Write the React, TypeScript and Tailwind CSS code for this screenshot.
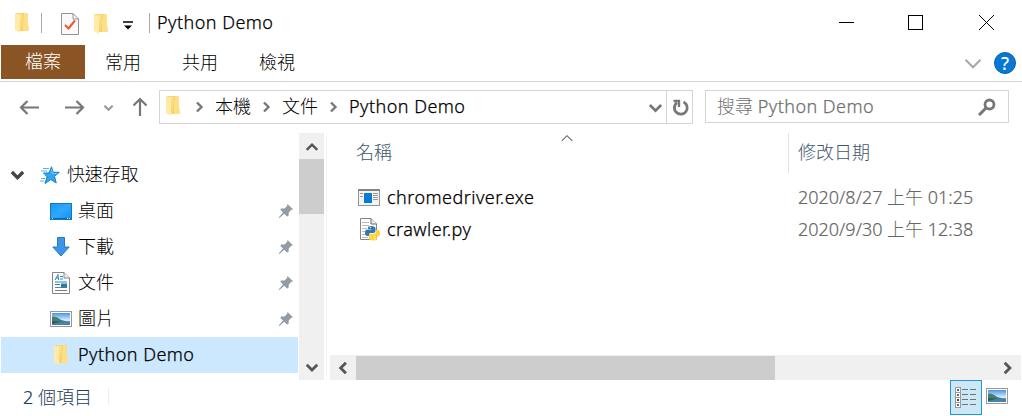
import type { ReactNode } from "react";

function Folder({ className = "" }: { className?: string }) {
  return (
    <svg width="16" height="22" viewBox="0 0 16 22" className={`shrink-0 ${className}`}>
      <defs>
        <linearGradient id="folderFace" x1="0" y1="0" x2="1" y2="1">
          <stop offset="0" stopColor="#ffe9a3" />
          <stop offset="1" stopColor="#f7cf62" />
        </linearGradient>
      </defs>
      <path d="M2 1H13.5V14.5L14.5 15V19H5L1 17Z" fill="#f3cb62" />
      <path d="M10 1H13.5V12L14.5 13V19H8Z" fill="#ffdf86" />
      <path d="M1 1L6 3V21L1 18Z" fill="#ffeaaa" />
      <path d="M3 1.5H9V19H6V4Z" fill="url(#folderFace)" />
    </svg>
  );
}

function Chevron({ dir, size = 12, color = "#777", stroke = 2.4, className = "" }: { dir: "up" | "down" | "left" | "right"; size?: number; color?: string; stroke?: number; className?: string }) {
  const paths = {
    up: "M1.5 8.5L6 4L10.5 8.5",
    down: "M1.5 4L6 8.5L10.5 4",
    left: "M8.5 1.5L4 6L8.5 10.5",
    right: "M4 1.5L8.5 6L4 10.5",
  };
  return (
    <svg width={size} height={size} viewBox="0 0 12 12" className={`shrink-0 ${className}`} fill="none" stroke={color} strokeWidth={stroke}>
      <path d={paths[dir]} />
    </svg>
  );
}

function Pin() {
  return (
    <svg width="16" height="16" viewBox="0 0 16 16" className="mr-[5px] shrink-0">
      <path d="M9.5 1L15 6.3L13 7L10.7 9.8L10.5 13L9 13.5L6.2 10.7L1.5 15L.7 14.5L5 9.5L2.3 6.7L3 5.5L6.5 5.4L9 3Z" fill="#939ca5" />
    </svg>
  );
}

function Picture() {
  return (
    <svg width="22" height="16" viewBox="0 0 22 16" className="shrink-0">
      <defs>
        <linearGradient id="sky" x1="0" y1="0" x2="0" y2="1">
          <stop offset="0" stopColor="#4a94ea" />
          <stop offset=".6" stopColor="#d8edfa" />
        </linearGradient>
      </defs>
      <rect x=".5" y=".5" width="21" height="15" fill="#fff" stroke="#999" />
      <rect x="2" y="2" width="18" height="12" fill="url(#sky)" />
      <path d="M2 5.5Q6 5 9 7.5T20 10.5V11H2Z" fill="#477f6d" />
      <path d="M2 10.5H20V14H2Z" fill="#4682ab" />
      <path d="M2 10L12 10.5L2 13Z" fill="#285f61" />
    </svg>
  );
}

function Desktop() {
  return (
    <svg width="22" height="17" viewBox="0 0 22 17">
      <defs>
        <linearGradient id="screen" x1="0" y1="0" x2="1" y2="1">
          <stop offset="0" stopColor="#1996f4" />
          <stop offset=".5" stopColor="#30a8ff" />
          <stop offset="1" stopColor="#148cf0" />
        </linearGradient>
      </defs>
      <rect x=".5" y=".5" width="21" height="16" fill="url(#screen)" stroke="#1577bd" />
      <path d="M1 15.5H21" stroke="#0868aa" />
      <path d="M2 15.5H3M17 15.5H18M19 15.5H20" stroke="#c5e9ff" />
    </svg>
  );
}

function Download() {
  return (
    <svg width="18" height="20" viewBox="0 0 18 20">
      <path d="M5.5.5H12.5V10H17.2L9 19L.8 10H5.5Z" fill="#3c95e8" stroke="#2679c6" />
    </svg>
  );
}

function Document() {
  return (
    <svg width="18" height="22" viewBox="0 0 18 22">
      <path d="M.5.5H12L17.5 6V21.5H.5Z" fill="#fff" stroke="#858585" />
      <path d="M12 .5V6H17.5" fill="#eee" stroke="#858585" />
      <path d="M3 8L6 2.5L6.5 8M4 6H6.5M8 4.5H11M8 7H11M3 10H15M3 12.5H8" fill="none" stroke="#2587c7" />
      <path d="M3 15.5H15M3 18.5H15" stroke="#707b82" />
      <rect x="9" y="11.5" width="6" height="4" fill="#287ca8" />
    </svg>
  );
}

function QuickAccess() {
  return (
    <svg width="20" height="19" viewBox="0 0 20 19" className="shrink-0">
      <path d="M11.5.8L13.2 6.3H19.3L14.5 10.3L16.2 17L10.8 13.5L5 17.5L7 10.8L3.5 7H9Z" fill="#2fa6f3" stroke="#147fc9" />
      <path d="M3 2.5H9M1 5H7M4 8H6M1 12.5H5M0 15H4" stroke="#59b3e9" />
      <path d="M11.5 3L12.2 7.5H17" fill="none" stroke="#75ccff" />
    </svg>
  );
}

function ExeIcon() {
  return (
    <svg width="22" height="17" viewBox="0 0 22 17" className="shrink-0">
      <rect x=".5" y=".5" width="21" height="16" fill="#f3f3f3" stroke="#929292" />
      <path d="M0 1H22" stroke="#858585" strokeWidth="2" />
      <rect x="6" y="4" width="8" height="10" fill="#087bd7" />
      <path d="M2 4.5H5M2 7.5H5M15 4.5H20M15 6.5H20M15 8.5H20M15 10.5H20" stroke="#999" />
    </svg>
  );
}

function PythonFile() {
  return (
    <svg width="20" height="23" viewBox="0 0 20 23">
      <path d="M.5.5H11L16.5 6V21.5H.5Z" fill="#fff" stroke="#858585" />
      <path d="M11 .5V6H16.5" fill="#eee" stroke="#686868" />
      <path d="M2 4.5H9M2 7.5H9M2 10.5H7M2 13.5H6M2 16.5H7M2 19.5H8" stroke="#bbb" />
      <path d="M8 11V9.5Q8 8 11 8Q15.5 8 15.5 10.5V12.5Q15.5 15 13 15H10.5Q9 15 9 18H7.5Q5 18 5 14.5Q5 11.5 7.5 11.5H11.5V11Z" fill="#3776aa" />
      <path d="M16 12H17.2Q20 12 20 15.2Q20 18.5 17.5 18.5H13.5V19H17V20.5Q17 22.5 13 22.5Q9 22.5 9 20V18.5Q9 15.8 11.5 15.8H14Q16 15.8 16 13.5Z" fill="#ffd43b" />
      <circle cx="10.3" cy="9.6" r=".7" fill="#fff" />
      <circle cx="15" cy="20.7" r=".7" fill="#fff" />
    </svg>
  );
}

function SideItem({ icon, children, pinned = true }: { icon: ReactNode; children: ReactNode; pinned?: boolean }) {
  return (
    <div className="flex h-9 items-center pl-[49px]">
      <div className="flex w-[23px] shrink-0 justify-center">{icon}</div>
      <span className="ml-[6px] flex-1 pb-0.5">{children}</span>
      {pinned && <Pin />}
    </div>
  );
}

function Name({ children }: { children: ReactNode }) {
  return <span className="tracking-[0.46px] [-webkit-text-stroke:0.25px_currentColor]">{children}</span>;
}

function Digits({ children }: { children: ReactNode }) {
  return <span className="[-webkit-text-stroke:0.2px_currentColor]">{children}</span>;
}

function Arrow({ up = false, right = false }: { up?: boolean; right?: boolean }) {
  return (
    <svg width="20" height="20" viewBox="0 0 20 20" fill="none" stroke="#777" strokeWidth="2.2" className="shrink-0">
      <path d={up ? "M10 19V2M3.5 8.5L10 2L16.5 8.5" : right ? "M0 10.5H18M11.5 4L18 10.5L11.5 17" : "M20 10.5H2M8.5 4L2 10.5L8.5 17"} />
    </svg>
  );
}

export default function App() {
  return (
    <div className="flex h-[416px] w-[1022px] flex-col overflow-hidden bg-white font-['Noto_Sans','Noto_Sans_CJK_TC',sans-serif] text-[18px] leading-[24px] font-light text-black">
      <header className="flex h-[45px] shrink-0 items-center">
        <Folder className="ml-[14px]" />
        <div className="ml-[11px] h-5 w-px bg-[#aaa]" />
        <svg width="18" height="22" viewBox="0 0 18 22" className="mt-[3px] ml-[19px]">
          <path d="M.5.5H12L17.5 6V21.5H.5Z" fill="#fafafa" stroke="#929292" />
          <path d="M12 .5V6H17.5" fill="none" stroke="#929292" />
          <path d="M4 12L7.5 15.5L14 7.5" fill="none" stroke="#ef5527" strokeWidth="2" />
        </svg>
        <Folder className="mt-[3px] ml-[14px]" />
        <svg width="10" height="9" viewBox="0 0 10 9" className="mt-[6px] ml-[14px]"><path d="M0 1H10" stroke="#000" strokeWidth="1.5" /><path d="M1 4.5H9L5 8.5Z" /></svg>
        <div className="ml-4 h-5 w-px bg-[#aaa]" />
        <h1 className="ml-[7px] pb-0.5"><Name>Python Demo</Name></h1>
        <svg width="156" height="17" viewBox="0 0 156 17" className="ml-auto mr-[27px]" fill="none" stroke="#000" shapeRendering="crispEdges"><path d="M0 8.5H15M140 1L155 16M155 1L140 16" /><rect x="69.5" y="1.5" width="14" height="14" /></svg>
      </header>

      <nav className="flex h-[37px] shrink-0 items-start border-b border-[#d5d5d5]">
        <div className="ml-px flex h-[34px] w-[84px] items-center justify-center bg-[#8a5424] pb-0.5 text-white">檔案</div>
        <span className="ml-5 mt-[5px]">常用</span>
        <span className="ml-[41px] mt-[5px]">共用</span>
        <span className="ml-[41px] mt-[5px]">檢視</span>
        <Chevron dir="down" size={20} color="#aaa" stroke={1.3} className="mt-[8px] ml-auto" />
        <div className="mt-[7px] mr-[6px] ml-[11px] flex size-[22px] items-center justify-center rounded-full border border-[#095eaa] bg-[#0878d6] text-[18px] font-medium text-white">?</div>
      </nav>

      <div className="flex h-[51px] shrink-0 items-start pt-2">
        <div className="flex h-[34px] items-center pl-[19px]">
          <Arrow />
          <div className="ml-[26px]"><Arrow right /></div>
          <Chevron dir="down" size={11} color="#999" className="ml-[18px]" />
          <div className="ml-[16px]"><Arrow up /></div>
        </div>
        <div className="ml-[9px] flex h-[34px] w-[534px] shrink-0 items-center border border-[#d5d5d5] pl-[5px]">
          <Folder className="mb-0.5" />
          <Chevron dir="right" className="ml-[12px]" />
          <span className="ml-[10px] w-9 pb-0.5 whitespace-nowrap">本機</span>
          <Chevron dir="right" className="ml-[9px]" />
          <span className="ml-[10px] w-9 pb-0.5 whitespace-nowrap">文件</span>
          <Chevron dir="right" className="ml-[9px]" />
          <span className="ml-[10px] pb-0.5 whitespace-nowrap"><Name>Python Demo</Name></span>
          <Chevron dir="down" size={15} stroke={2.2} className="ml-auto mr-[3px]" />
          <div className="flex h-full w-[26px] items-center justify-center border-l border-[#d5d5d5] pl-0.5">
            <svg width="18" height="19" viewBox="0 0 18 19" fill="none" stroke="#777" strokeWidth="2.8"><path d="M11.5 4A6.4 6.4 0 1 1 5 4.6" /><path d="M1.5 3H7V9" strokeWidth="2.4" /></svg>
          </div>
        </div>
        <div className="ml-3 flex h-[33px] w-[304px] shrink-0 items-center border border-[#d5d5d5] pr-3 pl-[11px] text-[#707070]">
          <span className="flex-1 pb-0.5">搜尋 <Name>Python Demo</Name></span>
          <svg width="18" height="18" viewBox="0 0 18 18" fill="none" stroke="#777"><circle cx="11.5" cy="6.5" r="4.5" strokeWidth="2.8" /><path d="M8 10L1 17" strokeWidth="3" /></svg>
        </div>
      </div>

      <main className="flex h-[247px] shrink-0">
        <aside className="w-[299px] shrink-0">
          <div className="flex h-[60px] items-center pt-[23px] pl-[10px]">
            <Chevron dir="down" size={15} color="#444" stroke={2.6} />
            <div className="mt-0.5 ml-[15px] flex"><QuickAccess /></div>
            <span className="ml-[7px] pb-0.5 tracking-[-0.2px]">快速存取</span>
          </div>
          <SideItem icon={<Desktop />}>桌面</SideItem>
          <SideItem icon={<Download />}>下載</SideItem>
          <SideItem icon={<Document />}>文件</SideItem>
          <SideItem icon={<Picture />}>圖片</SideItem>
          <div className="ml-px w-[297px] bg-[#cce8ff] [&>div]:pl-12">
            <SideItem icon={<Folder />} pinned={false}><Name>Python Demo</Name></SideItem>
          </div>
        </aside>
        <div className="flex w-[25px] shrink-0 flex-col items-center bg-[#f0f0f0]">
          <Chevron dir="up" size={14} color="#555" stroke={2.1} className="mt-[7px] mb-[5px]" />
          <div className="h-[55px] w-full bg-[#cdcdcd]" />
          <Chevron dir="down" size={14} color="#555" className="mt-auto mb-[6px]" />
        </div>
        <div className="ml-[2px] w-px bg-[#f5f5f5]" />
        <section className="ml-[3px] flex w-[691px] shrink-0 flex-col">
          <div className="flex h-[48px] text-[#43566e]">
            <span className="mt-[7px] w-[230px] pl-[26px]">名稱</span>
            <Chevron dir="up" size={14} color="#666" stroke={.9} className="-mt-[2px]" />
            <div className="ml-auto h-[40px] w-[233px] border-l border-[#e2e2e2] pt-[7px] pl-[9px]">修改日期</div>
          </div>
          <div className="flex h-8 items-center pl-7">
            <ExeIcon />
            <span className="ml-[7px]"><Name>chromedriver.exe</Name></span>
            <span className="ml-auto w-[223px] text-[#666]"><Digits>2020/8/27</Digits> 上午 <Digits>01:25</Digits></span>
          </div>
          <div className="flex h-8 items-center pl-[30px]">
            <PythonFile />
            <span className="ml-[7px]"><Name>crawler.py</Name></span>
            <span className="ml-auto w-[223px] text-[#666]"><Digits>2020/9/30</Digits> 上午 <Digits>12:38</Digits></span>
          </div>
          <div className="mt-auto flex h-[25px] items-center bg-[#f0f0f0] pr-[7px] pl-[6px]">
            <Chevron dir="left" size={14} color="#555" />
            <div className="ml-[6px] h-6 w-[419px] bg-[#cdcdcd]" />
            <Chevron dir="right" size={14} color="#555" className="ml-auto" />
          </div>
        </section>
      </main>

      <footer className="flex h-[36px] shrink-0 items-start text-[#243b5a]">
        <span className="ml-[23px] mt-[5px]"><Digits>2</Digits> 個項目</span>
        <div className="mt-[8px] ml-[16px] h-[17px] w-px bg-[#eee]" />
        <div className="ml-auto flex h-[35px] w-8 items-center justify-center border border-[#2695cc] bg-[#cce8f6]">
          <svg width="22" height="21" viewBox="0 0 22 21" fill="none" shapeRendering="crispEdges">
            <path d="M.5.5H5.5V20.5H.5ZM.5 5.5H5.5M.5 10.5H5.5M.5 15.5H5.5" fill="#fff" stroke="#999" />
            <path d="M2 3H4M2 8H4M2 18H4" stroke="#666" strokeWidth="2" />
            <path d="M2 13H4" stroke="#73332e" strokeWidth="2" />
            <path d="M7 2.5H13M15 2.5H21M7 7.5H13M15 7.5H21M7 12.5H13M15 12.5H21M7 17.5H13M15 17.5H21" stroke="#687477" />
          </svg>
        </div>
        <div className="mt-2 mr-[14px] ml-1"><Picture /></div>
      </footer>
    </div>
  );
}
